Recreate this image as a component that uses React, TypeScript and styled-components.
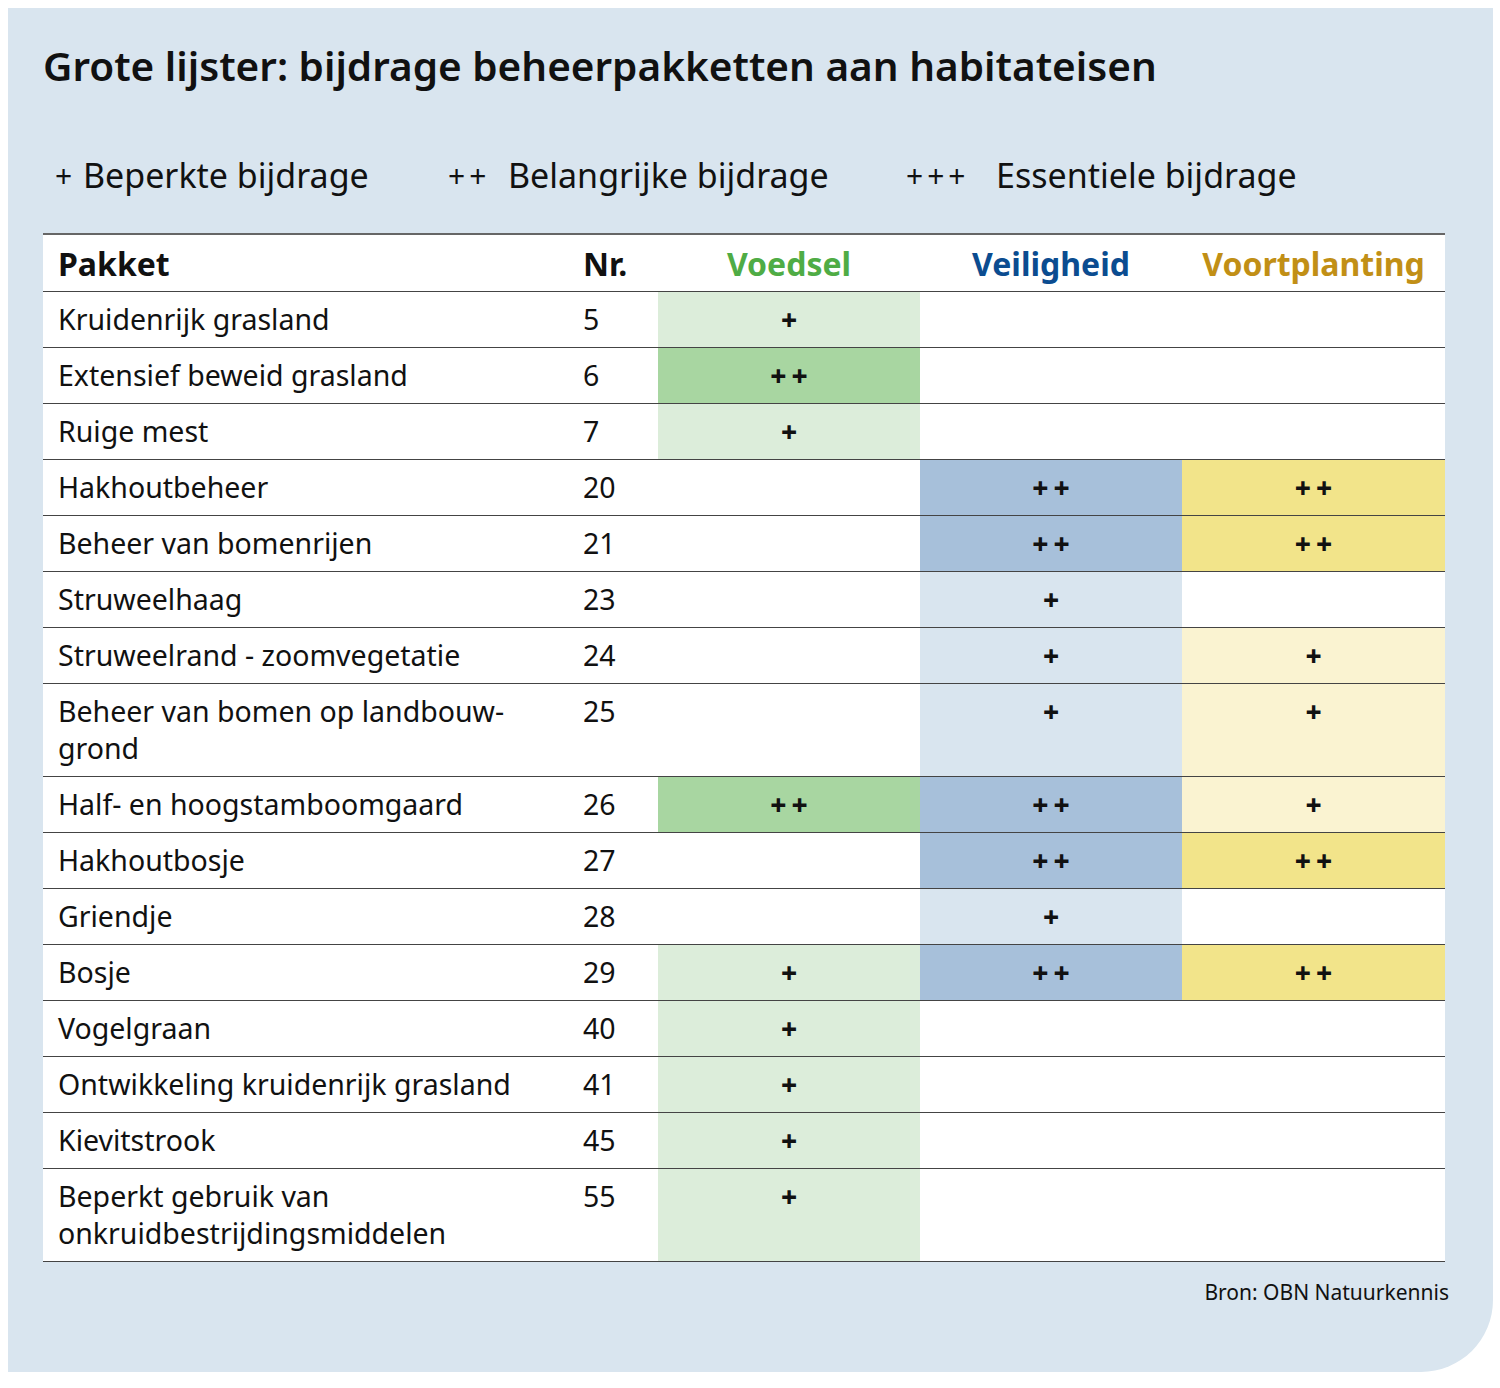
import React from "react";
import styled, { createGlobalStyle } from "styled-components";

const Global = createGlobalStyle`
  html, body { margin: 0; padding: 0; background: #ffffff; }
  body { padding: 8px 7px 16px 8px; font-family: "Noto Sans", "DejaVu Sans", sans-serif; color: #111; }
`;

const Panel = styled.div`
  width: 1485px;
  height: 1364px;
  box-sizing: border-box;
  background: #d9e5ef;
  border-bottom-right-radius: 72px;
  padding: 30px 48px 0 35px;
  display: flex;
  flex-direction: column;
`;

const Title = styled.h1`
  margin: 0;
  font-size: 40.5px;
  line-height: 56px;
  font-weight: 600;
  color: #111;
  letter-spacing: 0px;
`;

const Legend = styled.div`
  display: flex;
  align-items: center;
  margin-top: 55px;
  height: 52px;
  padding-left: 12px;
  font-size: 34px;
  color: #111;
`;

const LegendItem = styled.div<{ $w: number }>`
  display: flex;
  align-items: center;
  width: ${(p) => p.$w}px;
`;

const LegendSym = styled.span<{ $w: number }>`
  display: inline-block;
  width: ${(p) => p.$w}px;
  font-size: 30px;
  letter-spacing: 4px;
`;

const Table = styled.div`
  margin-top: 32px;
  width: 1402px;
  background: #fff;
  border-top: 2px solid #666;
  display: grid;
  grid-template-columns: 525px 90px 262px 262px 263px;
`;

const HeadCell = styled.div<{ $color?: string; $center?: boolean }>`
  height: 57px;
  box-sizing: border-box;
  border-bottom: 1.5px solid #444;
  display: flex;
  align-items: center;
  justify-content: ${(p) => (p.$center ? "center" : "flex-start")};
  padding-left: ${(p) => (p.$center ? "0" : "15px")};
  font-size: 32px;
  font-weight: 700;
  color: ${(p) => p.$color || "#111"};
`;

const Cell = styled.div<{ $bg?: string }>`
  box-sizing: border-box;
  min-height: 56px;
  padding: 9px 15px 9px 15px;
  border-bottom: 1.5px solid #444;
  background: ${(p) => p.$bg || "transparent"};
  font-size: 28.5px;
  line-height: 37px;
  color: #111;
`;

const MarkCell = styled(Cell)`
  padding: 9px 0;
  text-align: center;
  font-weight: 800;
  font-size: 28px;
  letter-spacing: 5px;
  text-indent: 5px;
`;

const Source = styled.div`
  width: 1406px;
  text-align: right;
  margin-top: 16px;
  font-size: 21px;
  color: #111;
`;

type Mark = "" | "+" | "++";
const rows: [string, string, Mark, Mark, Mark][] = [
  ["Kruidenrijk grasland", "5", "+", "", ""],
  ["Extensief beweid grasland", "6", "++", "", ""],
  ["Ruige mest", "7", "+", "", ""],
  ["Hakhoutbeheer", "20", "", "++", "++"],
  ["Beheer van bomenrijen", "21", "", "++", "++"],
  ["Struweelhaag", "23", "", "+", ""],
  ["Struweelrand - zoomvegetatie", "24", "", "+", "+"],
  ["Beheer van bomen op landbouw-\u200bgrond", "25", "", "+", "+"],
  ["Half- en hoogstamboomgaard", "26", "++", "++", "+"],
  ["Hakhoutbosje", "27", "", "++", "++"],
  ["Griendje", "28", "", "+", ""],
  ["Bosje", "29", "+", "++", "++"],
  ["Vogelgraan", "40", "+", "", ""],
  ["Ontwikkeling kruidenrijk grasland", "41", "+", "", ""],
  ["Kievitstrook", "45", "+", "", ""],
  ["Beperkt gebruik van onkruidbestrijdingsmiddelen", "55", "+", "", ""],
];

const palette = {
  voedsel: { "+": "#dcedda", "++": "#a8d6a1" },
  veilig: { "+": "#d9e5ef", "++": "#a7c0da" },
  voort: { "+": "#faf3d1", "++": "#f2e48a" },
};

const bgFor = (col: keyof typeof palette, m: Mark) => (m ? palette[col][m] : undefined);

export default function App() {
  return (
    <>
      <Global />
      <Panel>
        <Title>Grote lijster: bijdrage beheerpakketten aan habitateisen</Title>
        <Legend>
          <LegendItem $w={393}>
            <LegendSym $w={28}>+</LegendSym>
            Beperkte bijdrage
          </LegendItem>
          <LegendItem $w={458}>
            <LegendSym $w={60}>++</LegendSym>
            Belangrijke bijdrage
          </LegendItem>
          <LegendItem $w={420}>
            <LegendSym $w={90}>+++</LegendSym>
            Essentiele bijdrage
          </LegendItem>
        </Legend>
        <Table>
          <HeadCell>Pakket</HeadCell>
          <HeadCell>Nr.</HeadCell>
          <HeadCell $center $color="#4fac45">Voedsel</HeadCell>
          <HeadCell $center $color="#0b4c90">Veiligheid</HeadCell>
          <HeadCell $center $color="#c18f16">Voortplanting</HeadCell>
          {rows.map(([name, nr, a, b, c]) => (
            <React.Fragment key={nr}>
              <Cell>{name}</Cell>
              <Cell>{nr}</Cell>
              <MarkCell $bg={bgFor("voedsel", a)}>{a}</MarkCell>
              <MarkCell $bg={bgFor("veilig", b)}>{b}</MarkCell>
              <MarkCell $bg={bgFor("voort", c)}>{c}</MarkCell>
            </React.Fragment>
          ))}
        </Table>
        <Source>Bron: OBN Natuurkennis</Source>
      </Panel>
    </>
  );
}
